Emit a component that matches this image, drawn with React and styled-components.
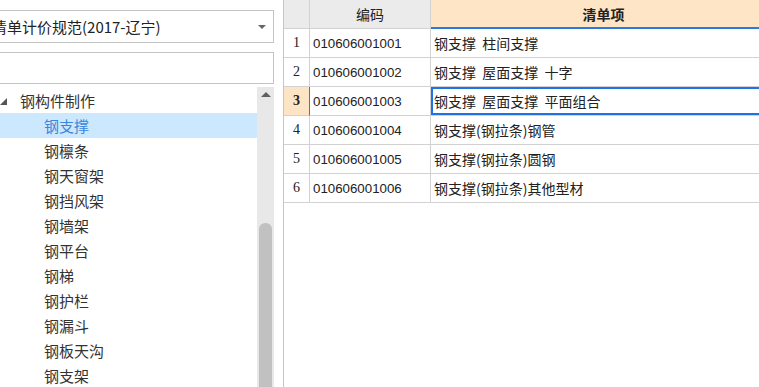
import React from 'react';
import styled, { createGlobalStyle } from 'styled-components';

const GlobalStyle = createGlobalStyle`
    html, body {
        margin: 0;
        padding: 0;
        background: #fff;
    }
    body {
        font-family: "Noto Sans CJK SC", "Liberation Sans", sans-serif;
        color: #333;
    }
`;

const Page = styled.div`
    display: flex;
    width: 759px;
    height: 387px;
    overflow: hidden;
    background: #fff;
`;

/* 左侧面板 */
const LeftPanel = styled.div`
    width: 283px;
    flex-shrink: 0;
    overflow: hidden;
`;

const LeftInner = styled.div`
    margin-left: -20px;
    padding: 10px 9px 0 0;
    display: flex;
    flex-direction: column;
    height: 387px;
    box-sizing: border-box;
`;

const Combo = styled.div`
    height: 33px;
    box-sizing: border-box;
    border: 1px solid #c4c4c4;
    display: flex;
    align-items: center;
    justify-content: space-between;
    padding: 0 7px 0 11px;
    font-size: 15px;
    color: #222;
    white-space: nowrap;
`;

const ComboArrow = styled.span`
    width: 0;
    height: 0;
    border-left: 4px solid transparent;
    border-right: 4px solid transparent;
    border-top: 4px solid #666;
`;

const SearchBox = styled.div`
    margin-top: 9px;
    height: 32px;
    box-sizing: border-box;
    border: 1px solid #c4c4c4;
`;

const TreeArea = styled.div`
    margin-top: 3px;
    flex: 1;
    display: flex;
    min-height: 0;
`;

const TreeList = styled.div`
    flex: 1;
    padding-top: 1px;
`;

const TreeRow = styled.div`
    height: 25px;
    display: flex;
    align-items: center;
    padding-left: ${p => (p.$level === 0 ? 20 : 64)}px;
    font-size: 15px;
    white-space: nowrap;
    color: ${p => (p.$selected ? '#3a86dc' : '#333')};
    background: ${p => (p.$selected ? '#cce8ff' : 'transparent')};
`;

const Expander = styled.svg`
    width: 7px;
    height: 7px;
    margin-right: 13px;
    margin-top: 2px;
`;

const ScrollTrack = styled.div`
    width: 17px;
    background: #e8e8e8;
    display: flex;
    flex-direction: column;
    align-items: center;
`;

const ScrollUp = styled.div`
    margin-top: 5px;
    width: 0;
    height: 0;
    border-left: 5px solid transparent;
    border-right: 5px solid transparent;
    border-bottom: 5px solid #606060;
`;

const ScrollThumb = styled.div`
    margin-top: 126px;
    width: 13px;
    flex: 1;
    background: #c1c1c1;
    border-radius: 6px 6px 0 0;
`;

/* 右侧表格 */
const GridPanel = styled.div`
    flex: 1;
    border-left: 1px solid #c6c6c6;
    overflow: hidden;
`;

const GridRow = styled.div`
    display: grid;
    grid-template-columns: 26px 121px 346px;
    height: 29px;
`;

const HeadCell = styled.div`
    display: flex;
    align-items: center;
    justify-content: center;
    font-size: 14px;
    color: #222;
    font-weight: ${p => (p.$active ? 700 : 400)};
    background: ${p => (p.$active ? '#fde5c6' : '#ebebeb')};
    border-right: 1px solid #d2d2d2;
    border-bottom: ${p => (p.$active ? '2px solid #2a7ae2' : '1px solid #d2d2d2')};
    box-sizing: border-box;
`;

const NumCell = styled.div`
    display: flex;
    align-items: center;
    justify-content: center;
    font-family: "Liberation Serif", serif;
    font-size: 14px;
    color: #222;
    font-weight: ${p => (p.$current ? 700 : 400)};
    background: ${p => (p.$current ? '#fde4c4' : '#fff')};
    border-right: 1px solid ${p => (p.$current ? '#2a7ae2' : '#d2d2d2')};
    border-bottom: 1px solid #d2d2d2;
    box-sizing: border-box;
`;

const CodeCell = styled.div`
    display: flex;
    align-items: center;
    padding-left: 3px;
    font-family: "Liberation Sans", sans-serif;
    font-size: 13.3px;
    color: #222;
    border-right: 1px solid #d2d2d2;
    border-bottom: 1px solid #d2d2d2;
    box-sizing: border-box;
`;

const ItemCell = styled.div`
    display: flex;
    align-items: center;
    padding-left: 3px;
    font-size: 14px;
    color: #222;
    white-space: pre;
    border-bottom: 1px solid #d2d2d2;
    box-sizing: border-box;
    box-shadow: ${p => (p.$focused ? 'inset 0 0 0 2px #1f72e4' : 'none')};
`;

const treeItems = [
    '钢支撑', '钢檩条', '钢天窗架', '钢挡风架', '钢墙架', '钢平台',
    '钢梯', '钢护栏', '钢漏斗', '钢板天沟', '钢支架', '零星钢构件',
];

const rows = [
    { code: '010606001001', name: '钢支撑  柱间支撑' },
    { code: '010606001002', name: '钢支撑  屋面支撑  十字' },
    { code: '010606001003', name: '钢支撑  屋面支撑  平面组合' },
    { code: '010606001004', name: '钢支撑(钢拉条)钢管' },
    { code: '010606001005', name: '钢支撑(钢拉条)圆钢' },
    { code: '010606001006', name: '钢支撑(钢拉条)其他型材' },
];

const App = () => {
    const currentRow = 2;

    return (
        <React.Fragment>
            <GlobalStyle />
            <Page>
                <LeftPanel>
                    <LeftInner>
                        <Combo>
                            <span>清单计价规范(2017-辽宁)</span>
                            <ComboArrow />
                        </Combo>
                        <SearchBox />
                        <TreeArea>
                            <TreeList>
                                <TreeRow $level={0}>
                                    <Expander viewBox="0 0 7 7">
                                        <polygon points="7,0 7,7 0,7" fill="#555" />
                                    </Expander>
                                    钢构件制作
                                </TreeRow>
                                {treeItems.map((t, i) => (
                                    <TreeRow key={t} $level={1} $selected={i === 0}>
                                        {t}
                                    </TreeRow>
                                ))}
                            </TreeList>
                            <ScrollTrack>
                                <ScrollUp />
                                <ScrollThumb />
                            </ScrollTrack>
                        </TreeArea>
                    </LeftInner>
                </LeftPanel>

                <GridPanel>
                    <GridRow>
                        <HeadCell />
                        <HeadCell>编码</HeadCell>
                        <HeadCell $active>清单项</HeadCell>
                    </GridRow>
                    {rows.map((r, i) => (
                        <GridRow key={r.code}>
                            <NumCell $current={i === currentRow}>{i + 1}</NumCell>
                            <CodeCell>{r.code}</CodeCell>
                            <ItemCell $focused={i === currentRow}>{r.name}</ItemCell>
                        </GridRow>
                    ))}
                </GridPanel>
            </Page>
        </React.Fragment>
    );
};

export default App;
